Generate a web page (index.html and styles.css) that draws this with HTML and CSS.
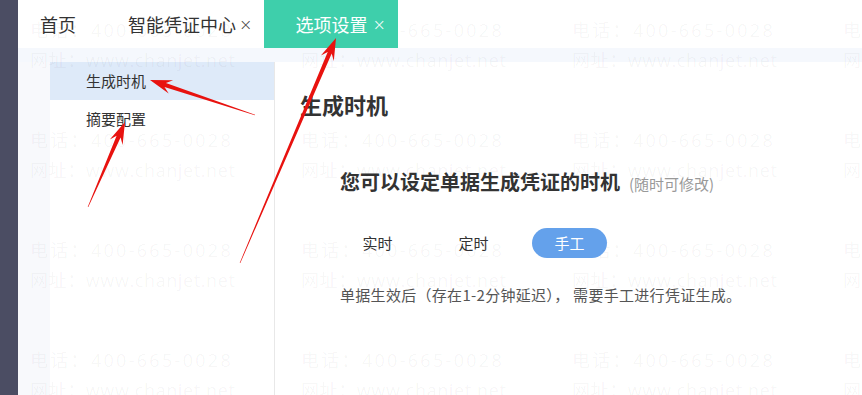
FILE: index.html
```html
<!DOCTYPE html>
<html lang="zh-CN">
  <head>
    <meta charset="UTF-8" />
    <meta name="viewport" content="width=device-width, initial-scale=1.0" />
    <title>选项设置</title>
    <link rel="stylesheet" href="styles.css">
  </head>

  <body>
    <div class="app">
      <div class="side"></div>
      <div class="main">
        <div class="tabs">
          <div class="tab home">首页</div>
          <div class="tab">智能凭证中心<span class="close">×</span></div>
          <div class="tab active">选项设置<span class="close">×</span></div>
        </div>
        <div class="band"></div>
        <div class="workspace">
          <ul class="menu">
            <li class="menu-item current">生成时机</li>
            <li class="menu-item">摘要配置</li>
          </ul>
          <div class="content">
            <h2 class="page-title">生成时机</h2>
            <div class="setting">
              <h3 class="setting-title">
                您可以设定单据生成凭证的时机<span class="hint">(随时可修改)</span>
              </h3>
              <div class="options">
                <span class="opt">实时</span>
                <span class="opt">定时</span>
                <span class="opt on">手工</span>
              </div>
              <p class="desc">单据生效后（存在1-2分钟延迟）， 需要手工进行凭证生成。</p>
            </div>
          </div>
        </div>
      </div>
    </div>

    <div class="watermark" id="watermark"></div>

    <svg class="marks" id="marks" width="862" height="395"></svg>

    <script>
      // watermark tiles
      const wm = document.getElementById("watermark");
      for (let i = 0; i < 16; i++) {
        const tile = document.createElement("div");
        tile.className = "wm-tile";
        tile.innerHTML =
          '<div class="wm-tel">电话：400-665-0028</div><div class="wm-url">网址：www.chanjet.net</div>';
        wm.appendChild(tile);
      }

      // red annotation arrows: tail -> tip
      function arrow(tx, ty, px, py) {
        const len = Math.hypot(px - tx, py - ty);
        const dx = (px - tx) / len;
        const dy = (py - ty) / len;
        const nx = -dy;
        const ny = dx;
        const headLen = 22, headW = 7, neck = 16, shaftW = 2.2;
        const bx = px - dx * headLen, by = py - dy * headLen;
        const sx = px - dx * neck, sy = py - dy * neck;
        const pts = [
          [px, py],
          [bx + nx * headW, by + ny * headW],
          [sx + nx * shaftW, sy + ny * shaftW],
          [tx + nx * 0.3, ty + ny * 0.3],
          [tx - nx * 0.3, ty - ny * 0.3],
          [sx - nx * shaftW, sy - ny * shaftW],
          [bx - nx * headW, by - ny * headW],
        ];
        return pts.map((p) => p[0].toFixed(1) + "," + p[1].toFixed(1)).join(" ");
      }

      const marks = document.getElementById("marks");
      [
        [255, 115, 150, 80],
        [88, 207, 125, 122],
        [240, 263, 336, 38],
      ].forEach(function (a) {
        const poly = document.createElementNS("http://www.w3.org/2000/svg", "polygon");
        poly.setAttribute("points", arrow(a[0], a[1], a[2], a[3]));
        poly.setAttribute("class", "arrow");
        marks.appendChild(poly);
      });
    </script>
  </body>
</html>
```

FILE: styles.css
```css
body {
  margin: 0;
  font-family: "Noto Sans CJK SC", "Noto Sans", sans-serif;
  color: #333;
  background-color: #fff;
  overflow: hidden;
  position: relative;
}

.app {
  display: flex;
  height: 100vh;
}

.side {
  width: 18px;
  background-color: #4b4d63;
}

.main {
  flex: 1;
  display: flex;
  flex-direction: column;
  background-color: #f8f9fc;
}

.tabs {
  height: 48px;
  display: flex;
  background-color: #fff;
}

.tab {
  display: flex;
  align-items: center;
  padding: 0 12px 0 31px;
  font-size: 18px;
  color: #333;
}

.tab.home {
  padding: 0 21px 0 22px;
}

.tab .close {
  margin-left: 3px;
  font-family: "DejaVu Sans", sans-serif;
  font-size: 16px;
  font-weight: 300;
  color: #444;
}

.tab.active {
  position: relative;
  z-index: 2;
  background-color: #3ecfab;
  color: #fff;
}

.tab.active .close {
  margin-left: 5px;
  color: #fff;
}

.band {
  height: 14px;
  background-color: #f5f8fd;
}

.workspace {
  flex: 1;
  display: flex;
  padding-left: 32px;
}

.menu {
  width: 224px;
  margin: 0;
  padding: 0;
  list-style: none;
  background-color: #fff;
  border-right: 1px solid #e8e8e8;
}

.menu-item {
  height: 38px;
  line-height: 38px;
  padding-left: 36px;
  font-size: 15px;
  color: #333;
}

.menu-item.current {
  background-color: #deeaf9;
}

.content {
  flex: 1;
  background-color: #fff;
  padding: 28px 0 0 25px;
}

.page-title {
  margin: 0;
  font-size: 22px;
  line-height: 28px;
  font-weight: bold;
  color: #333;
}

.setting {
  margin-left: 40px;
  padding-top: 50px;
}

.setting-title {
  margin: 0;
  font-size: 20px;
  line-height: 28px;
  font-weight: bold;
  color: #333;
}

.hint {
  margin-left: 9px;
  font-size: 15px;
  font-weight: normal;
  color: #999;
}

.options {
  display: flex;
  gap: 21px;
  margin-top: 30px;
}

.opt {
  width: 75px;
  height: 30px;
  line-height: 30px;
  text-align: center;
  border-radius: 15px;
  font-size: 15px;
  color: #333;
}

.opt.on {
  position: relative;
  z-index: 2;
  background-color: #64a1eb;
  color: #fff;
}

.desc {
  margin: 27px 0 0;
  font-size: 15px;
  line-height: 20px;
  letter-spacing: 0.3px;
  color: #555;
}

.watermark {
  position: absolute;
  inset: 0;
  z-index: 1;
  pointer-events: none;
  display: grid;
  grid-template-columns: repeat(4, 271px);
  grid-auto-rows: 110px;
  padding: 15px 0 0 30px;
  overflow: hidden;
}

.wm-tile {
  font-family: "Open Sans", "Noto Sans CJK SC", sans-serif;
  font-size: 18px;
  line-height: 30px;
  white-space: nowrap;
  color: rgba(0, 0, 0, 0.045);
}

.wm-tel {
  letter-spacing: 2.3px;
}

.wm-url {
  letter-spacing: 0.6px;
}

.marks {
  position: absolute;
  left: 0;
  top: 0;
  z-index: 3;
  pointer-events: none;
}

.arrow {
  fill: #e8120f;
}
```
